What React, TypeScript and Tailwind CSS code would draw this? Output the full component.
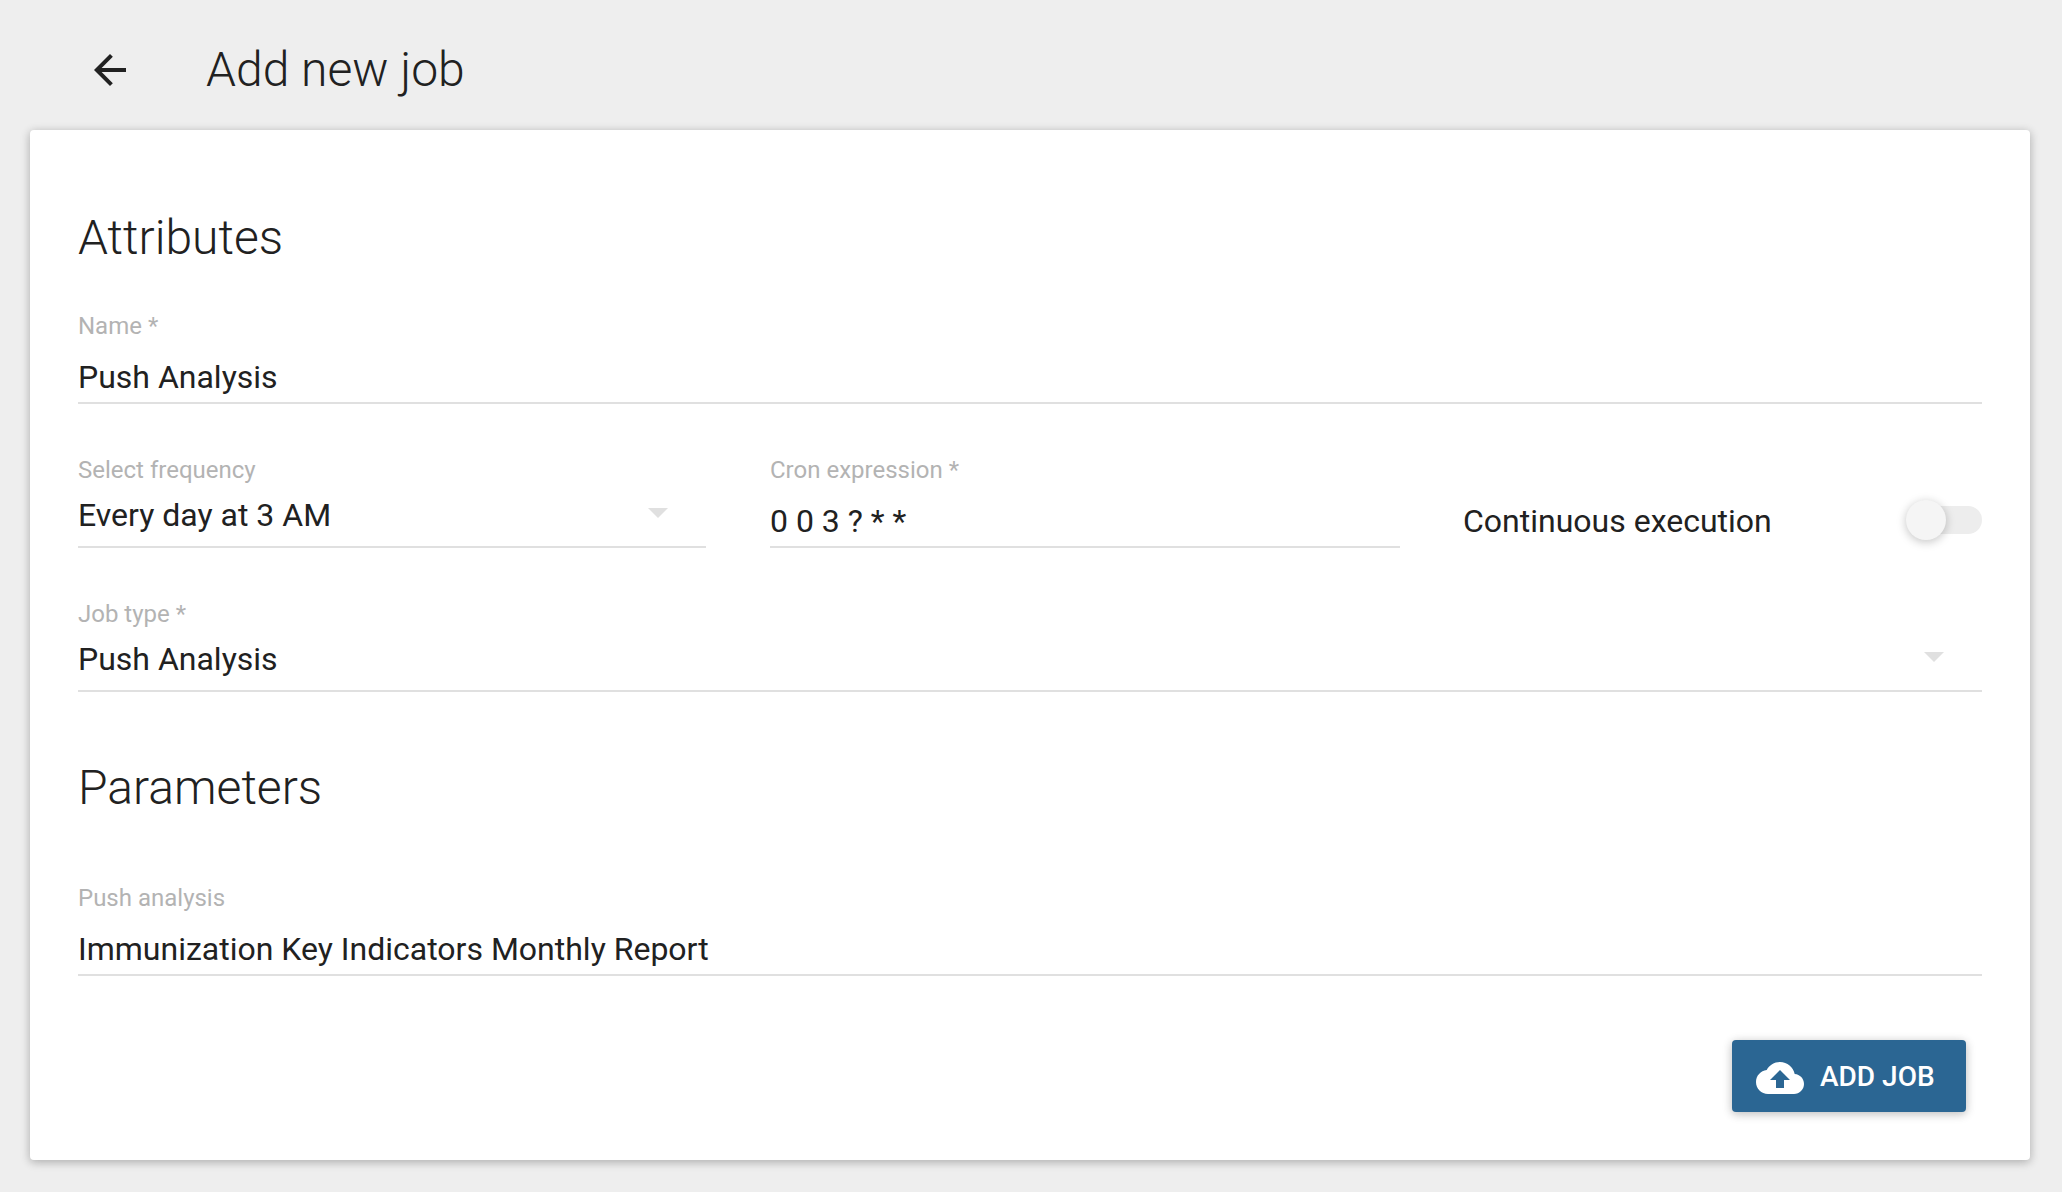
import React from "react";

function Caret() {
  return (
    <svg width="48" height="48" viewBox="0 0 24 24" fill="#e0e0e0">
      <path d="M7 10l5 5 5-5z" />
    </svg>
  );
}

type FieldProps = {
  label: string;
  value: string;
  className: string;
  caret?: boolean;
};

function Field({ label, value, className, caret }: FieldProps) {
  return (
    <div className={"flex h-[92px] flex-col border-b-2 border-[#e0e0e0] " + className}>
      <div className="text-[24px] leading-[28px] text-[#b3b3b3]">{label}</div>
      <div
        className={
          "flex h-[40px] items-center justify-between text-[32px] leading-[40px] text-[#212121] " +
          (caret ? "mt-[11px]" : "mt-[17px]")
        }
      >
        <span>{value}</span>
        {caret && (
          <span className="mr-[24px] mb-[6px]">
            <Caret />
          </span>
        )}
      </div>
    </div>
  );
}

export default function App() {
  return (
    <div className="h-[1192px] w-[2062px] overflow-hidden bg-[#eeeeee] font-['Roboto',sans-serif] text-[#212121]">
      <header className="flex h-[130px] items-center pt-[10px] pl-[86px]">
        <svg width="48" height="48" viewBox="0 0 24 24" fill="#212121">
          <path d="M20 11H7.830l5.590-5.590L12 4l-8 8 8 8 1.410-1.410L7.830 13H20v-2z" />
        </svg>
        <h1 className="ml-[72px] text-[48px] leading-[56px] font-light">Add new job</h1>
      </header>
      <main className="ml-[30px] h-[1030px] w-[2000px] rounded-[4px] bg-white px-[48px] pt-[80px] shadow-[0_2px_12px_rgba(0,0,0,0.12),0_2px_8px_rgba(0,0,0,0.18)]">
        <h2 className="text-[48px] leading-[56px] font-light">Attributes</h2>
        <Field label="Name *" value="Push Analysis" className="mt-[46px]" />
        <div className="mt-[52px] flex">
          <Field label="Select frequency" value="Every day at 3 AM" className="w-[628px]" caret />
          <Field label="Cron expression *" value="0 0 3 ? * *" className="ml-[64px] w-[630px]" />
          <div className="ml-[63px] flex flex-1 items-start justify-between pt-[45px] text-[32px] leading-[40px]">
            <span>Continuous execution</span>
            <div className="mt-[5px] flex h-[28px] w-[72px] items-center rounded-full bg-[#ededed]">
              <div className="-ml-[4px] size-[40px] rounded-full bg-[#f5f5f5] shadow-[0_2px_12px_rgba(0,0,0,0.12),0_2px_8px_rgba(0,0,0,0.12)]" />
            </div>
          </div>
        </div>
        <Field label="Job type *" value="Push Analysis" className="mt-[52px]" caret />
        <h2 className="mt-[68px] text-[48px] leading-[56px] font-light">Parameters</h2>
        <Field label="Push analysis" value="Immunization Key Indicators Monthly Report" className="mt-[68px]" />
        <div className="mt-[64px] flex justify-end pr-[16px]">
          <button className="flex h-[72px] w-[234px] items-center rounded-[4px] bg-[#2b6693] pl-[24px] text-[28px] leading-[42px] font-medium text-white shadow-[0_2px_12px_rgba(0,0,0,0.12),0_2px_8px_rgba(0,0,0,0.16)]">
            <svg className="mt-[4px]" width="48" height="48" viewBox="0 0 24 24" fill="white">
              <path d="M19.350 10.040C18.670 6.590 15.640 4 12 4 9.110 4 6.600 5.640 5.350 8.040 2.340 8.360 0 10.910 0 14c0 3.310 2.690 6 6 6h13c2.760 0 5-2.240 5-5 0-2.640-2.050-4.780-4.650-4.960zM14 13v4h-4v-4H7l5-5 5 5h-3z" />
            </svg>
            <span className="mt-[2px] ml-[16px]">ADD JOB</span>
          </button>
        </div>
      </main>
    </div>
  );
}
